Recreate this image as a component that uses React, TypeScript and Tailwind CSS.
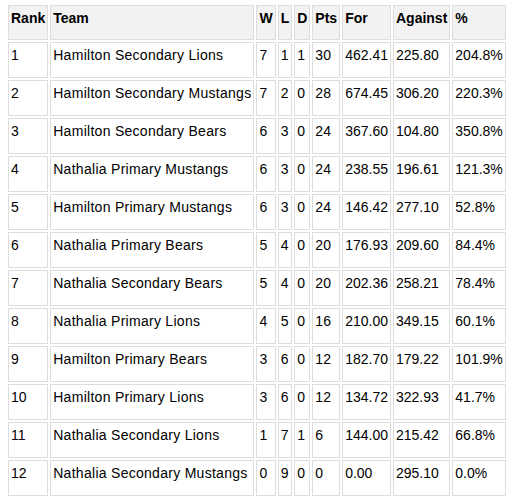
import React from "react";

const rows = [
  [1, "Hamilton Secondary Lions", 7, 1, 1, 30, "462.41", "225.80", "204.8%"],
  [2, "Hamilton Secondary Mustangs", 7, 2, 0, 28, "674.45", "306.20", "220.3%"],
  [3, "Hamilton Secondary Bears", 6, 3, 0, 24, "367.60", "104.80", "350.8%"],
  [4, "Nathalia Primary Mustangs", 6, 3, 0, 24, "238.55", "196.61", "121.3%"],
  [5, "Hamilton Primary Mustangs", 6, 3, 0, 24, "146.42", "277.10", "52.8%"],
  [6, "Nathalia Primary Bears", 5, 4, 0, 20, "176.93", "209.60", "84.4%"],
  [7, "Nathalia Secondary Bears", 5, 4, 0, 20, "202.36", "258.21", "78.4%"],
  [8, "Nathalia Primary Lions", 4, 5, 0, 16, "210.00", "349.15", "60.1%"],
  [9, "Hamilton Primary Bears", 3, 6, 0, 12, "182.70", "179.22", "101.9%"],
  [10, "Hamilton Primary Lions", 3, 6, 0, 12, "134.72", "322.93", "41.7%"],
  [11, "Nathalia Secondary Lions", 1, 7, 1, 6, "144.00", "215.42", "66.8%"],
  [12, "Nathalia Secondary Mustangs", 0, 9, 0, 0, "0.00", "295.10", "0.0%"],
];

const headers = ["Rank", "Team", "W", "L", "D", "Pts", "For", "Against", "%"];

const App = () => {
  return (
    <div className="pl-[6px] pt-[3px] font-['Liberation_Sans',Arial,sans-serif] text-[14px] text-black">
      <table className="border-separate border-spacing-[2px]">
        <thead>
          <tr>
            {headers.map((h) => (
              <th
                key={h}
                className="h-[35px] border border-[#dddddd] bg-[#f2f2f2] px-[2px] pt-[2px] text-left align-top font-bold"
              >
                {h}
              </th>
            ))}
          </tr>
        </thead>
        <tbody>
          {rows.map((r) => (
            <tr key={r[0]}>
              {r.map((c, i) => (
                <td
                  key={i}
                  className={
                    i === 1
                      ? "h-[36px] border border-[#dddddd] px-[2px] pt-[2px] text-left align-top tracking-[0.28px]"
                      : "h-[36px] border border-[#dddddd] px-[2px] pt-[2px] text-left align-top"
                  }
                >
                  {c}
                </td>
              ))}
            </tr>
          ))}
        </tbody>
      </table>
    </div>
  );
};

export default App;
